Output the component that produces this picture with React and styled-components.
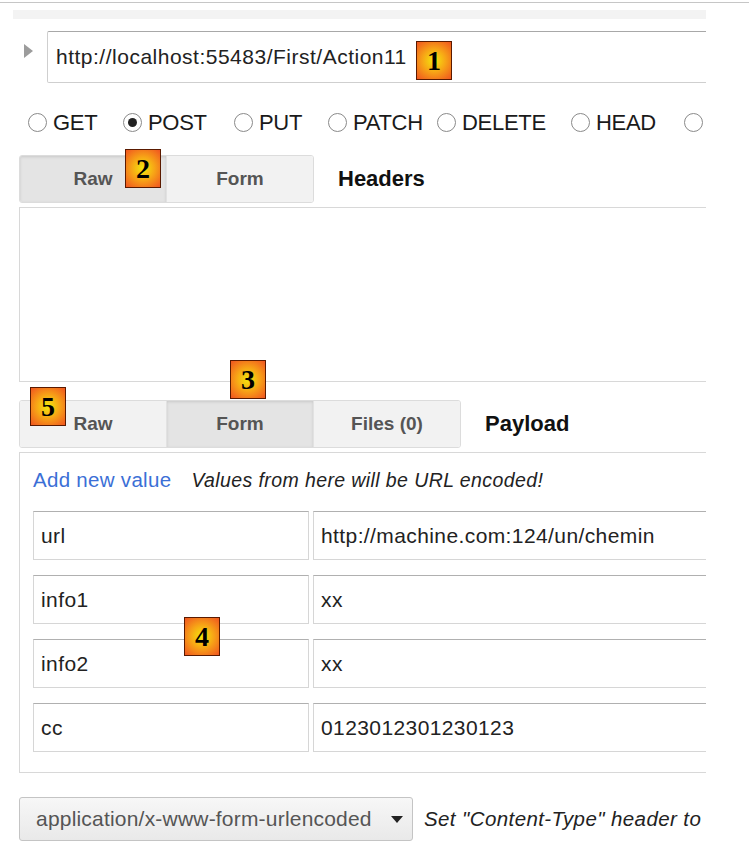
import React from "react";
import styled, { createGlobalStyle } from "styled-components";

const methods = [
  { name: "GET", w: 95 },
  { name: "POST", w: 111 },
  { name: "PUT", w: 94 },
  { name: "PATCH", w: 109 },
  { name: "DELETE", w: 134 },
  { name: "HEAD", w: 113 },
  { name: "", w: 40 },
];

const rows = [
  { key: "url", value: "http://machine.com:124/un/chemin" },
  { key: "info1", value: "xx" },
  { key: "info2", value: "xx" },
  { key: "cc", value: "0123012301230123" },
];

const badges = [
  { n: 1, x: 403, y: 38 },
  { n: 2, x: 112, y: 146 },
  { n: 3, x: 217, y: 357 },
  { n: 5, x: 17, y: 384 },
  { n: 4, x: 171, y: 614 },
];

export default function App() {
  return (
    <>
      <GlobalStyle />
      <Page>
        <TopRule />
        <Panel>
          <GreyBar />
          <UrlRow>
            <Arrow />
            <UrlInput>http://localhost:55483/First/Action11</UrlInput>
          </UrlRow>

          <Radios>
            {methods.map((m, i) => (
              <Radio key={i} $w={m.w}>
                <Circle $checked={m.name === "POST"} />
                {m.name && <span>{m.name}</span>}
              </Radio>
            ))}
          </Radios>

          <TabRow>
            <Tabs>
              <Tab $active>Raw</Tab>
              <Tab>Form</Tab>
            </Tabs>
            <TabTitle>Headers</TabTitle>
          </TabRow>
          <HeadersBox />

          <TabRow $top={18}>
            <Tabs>
              <Tab>Raw</Tab>
              <Tab $active>Form</Tab>
              <Tab>Files (0)</Tab>
            </Tabs>
            <TabTitle>Payload</TabTitle>
          </TabRow>
          <FormBox>
            <FormHead>
              <AddLink>Add new value</AddLink>
              <Hint>Values from here will be URL encoded!</Hint>
            </FormHead>
            {rows.map((r) => (
              <FieldRow key={r.key}>
                <KeyField>{r.key}</KeyField>
                <ValueField>{r.value}</ValueField>
              </FieldRow>
            ))}
          </FormBox>

          <Footer>
            <Select>
              application/x-www-form-urlencoded
              <Caret />
            </Select>
            <Hint $size={20.5}>Set "Content-Type" header to</Hint>
          </Footer>

          {badges.map((b) => (
            <Badge key={b.n} style={{ left: b.x, top: b.y }}>
              {b.n}
            </Badge>
          ))}
        </Panel>
      </Page>
    </>
  );
}

const GlobalStyle = createGlobalStyle`
  html, body {
    margin: 0;
    background: #fff;
    font-family: "Liberation Sans", Arial, sans-serif;
  }
`;

const Page = styled.div`
  width: 749px;
  height: 867px;
  padding-top: 2px;
  box-sizing: border-box;
`;

const TopRule = styled.div`
  height: 0;
  border-top: 1px solid #c6c6c6;
`;

const Panel = styled.div`
  position: relative;
  margin-left: 13px;
  width: 693px;
  height: 864px;
  overflow: hidden;
`;

const GreyBar = styled.div`
  margin-top: 7px;
  height: 9px;
  background: #f3f3f3;
`;

const UrlRow = styled.div`
  display: flex;
  align-items: center;
  margin-top: 12px;
  width: 800px;
`;

const Arrow = styled.div`
  width: 0;
  height: 0;
  margin-left: 11px;
  margin-right: 14px;
  margin-top: -12px;
  border-top: 7px solid transparent;
  border-bottom: 7px solid transparent;
  border-left: 9px solid #9c9c9c;
`;

const UrlInput = styled.div`
  flex: 1;
  height: 50px;
  display: flex;
  align-items: center;
  padding-left: 8px;
  border: 1px solid #cfcfcf;
  border-top-color: #a8a8a8;
  border-radius: 2px;
  font-size: 21px;
  letter-spacing: 0.5px;
  color: #222;
`;

const Radios = styled.div`
  display: flex;
  align-items: center;
  margin-top: 27px;
  padding-left: 15px;
  height: 25px;
  white-space: nowrap;
`;

const Radio = styled.div`
  display: flex;
  align-items: center;
  width: ${(p) => p.$w}px;
  flex-shrink: 0;
  font-size: 22px;
  color: #1a1a1a;
  letter-spacing: -0.3px;

  span {
    margin-left: 6px;
  }
`;

const Circle = styled.div`
  width: 19px;
  height: 19px;
  border: 1.5px solid #8a8a8a;
  border-radius: 50%;
  box-sizing: border-box;
  position: relative;
  flex-shrink: 0;

  &::after {
    content: "";
    display: ${(p) => (p.$checked ? "block" : "none")};
    position: absolute;
    left: 3.5px;
    top: 3.5px;
    width: 9px;
    height: 9px;
    border-radius: 50%;
    background: #222;
  }
`;

const TabRow = styled.div`
  display: flex;
  align-items: center;
  margin-top: ${(p) => p.$top ?? 20}px;
  margin-left: 6px;
`;

const Tabs = styled.div`
  display: flex;
  border: 1px solid #dcdcdc;
  border-radius: 3px;
  overflow: hidden;
`;

const Tab = styled.div`
  width: 146px;
  height: 46px;
  display: flex;
  align-items: center;
  justify-content: center;
  font-size: 19px;
  font-weight: bold;
  color: #555;
  background: ${(p) => (p.$active ? "#e4e4e4" : "#f2f2f2")};
  box-shadow: ${(p) => (p.$active ? "inset 0 1px 3px rgba(0,0,0,0.12)" : "none")};
  border-right: 1px solid #e2e2e2;

  &:last-child {
    border-right: none;
  }
`;

const TabTitle = styled.div`
  margin-left: 24px;
  font-size: 22px;
  font-weight: bold;
  color: #111;
`;

const HeadersBox = styled.div`
  margin: 4px 0 0 6px;
  width: 800px;
  height: 173px;
  border: 1px solid #d8d8d8;
`;

const FormBox = styled.div`
  margin: 4px 0 0 6px;
  width: 800px;
  height: 321px;
  box-sizing: border-box;
  border: 1px solid #d8d8d8;
  padding: 8px 0 0 13px;
`;

const FormHead = styled.div`
  display: flex;
  align-items: center;
  gap: 20px;
  height: 38px;
  margin-bottom: 12px;
`;

const AddLink = styled.span`
  font-size: 20.5px;
  letter-spacing: 0.3px;
  color: #3b6fd6;
`;

const Hint = styled.span`
  font-size: ${(p) => p.$size ?? 19.5}px;
  letter-spacing: 0.4px;
  font-style: italic;
  color: #222;
  white-space: nowrap;
`;

const FieldRow = styled.div`
  display: flex;
  gap: 4px;
  margin-bottom: 15px;
`;

const Field = styled.div`
  height: 49px;
  display: flex;
  align-items: center;
  padding-left: 7px;
  box-sizing: border-box;
  border: 1px solid #d6d6d6;
  border-top-color: #b0b0b0;
  font-size: 21px;
  letter-spacing: 0.4px;
  color: #222;
`;

const KeyField = styled(Field)`
  width: 276px;
`;

const ValueField = styled(Field)`
  width: 500px;
`;

const Footer = styled.div`
  display: flex;
  align-items: center;
  gap: 11px;
  margin: 24px 0 0 6px;
`;

const Select = styled.div`
  width: 394px;
  height: 44px;
  box-sizing: border-box;
  display: flex;
  align-items: center;
  padding-left: 16px;
  border: 1px solid #c4c4c4;
  border-radius: 3px;
  background: linear-gradient(#f7f7f7, #e9e9e9);
  font-size: 21px;
  letter-spacing: 0.2px;
  color: #555;
  white-space: nowrap;
  position: relative;
  flex-shrink: 0;
`;

const Caret = styled.span`
  position: absolute;
  right: 9px;
  top: 18px;
  width: 0;
  height: 0;
  border-left: 6px solid transparent;
  border-right: 6px solid transparent;
  border-top: 7px solid #222;
`;

const Badge = styled.div`
  position: absolute;
  width: 36px;
  height: 39px;
  box-sizing: border-box;
  border: 1px solid #5a1a00;
  background: radial-gradient(circle at 50% 50%, #f3e80c 0%, #f7a616 45%, #f05420 100%);
  display: flex;
  align-items: center;
  justify-content: center;
  font-family: "Liberation Serif", "Times New Roman", serif;
  font-weight: bold;
  font-size: 28px;
  color: #000;
`;
